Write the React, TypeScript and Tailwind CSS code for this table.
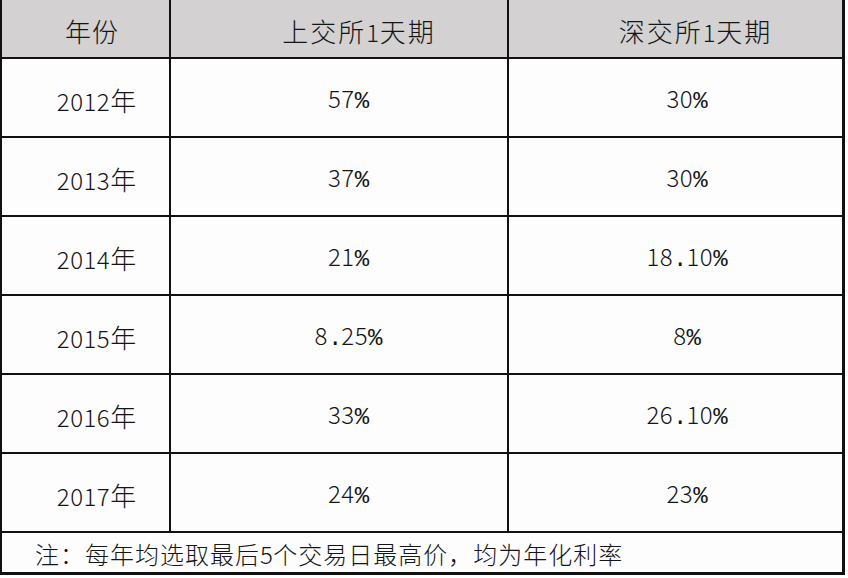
import React from "react";

const rows = [
  { year: "2012年", sh: "57%", sz: "30%" },
  { year: "2013年", sh: "37%", sz: "30%" },
  { year: "2014年", sh: "21%", sz: "18.10%" },
  { year: "2015年", sh: "8.25%", sz: "8%" },
  { year: "2016年", sh: "33%", sz: "26.10%" },
  { year: "2017年", sh: "24%", sz: "23%" },
];

// digits look narrow and thin, the dot and % sign are half-width mono glyphs
function Mixed({ text, cjk = "text-[26px]" }: { text: string; cjk?: string }) {
  const parts = text.split(/([0-9]+|%|\.)/).filter(Boolean);
  return (
    <span className="inline-flex items-baseline whitespace-nowrap">
      {parts.map((p, i) =>
        p === "%" || p === "." ? (
          <span key={i} className="font-['Liberation_Mono',monospace] text-[24px] tracking-[-1px]">
            {p}
          </span>
        ) : /^[0-9]+$/.test(p) ? (
          <span key={i} className="font-['Noto_Sans_CJK_SC',sans-serif] font-light text-[24px] tracking-[0.5px]">
            {p}
          </span>
        ) : (
          <span key={i} className={`font-['Noto_Sans_CJK_SC',sans-serif] font-light ${cjk}`}>
            {p}
          </span>
        )
      )}
    </span>
  );
}

export default function App() {
  return (
    <div className="w-[848px] h-[578px] bg-white">
      <div className="w-[845px] h-[575px] bg-[#111] pl-[2px] pr-[3px] pb-[3px] grid grid-cols-[167px_336px_333px] grid-rows-[57px_77px_77px_77px_77px_77px_77px_39px] gap-[2px] text-[#151515] leading-none">
        <div className="bg-[#d3d1d1] flex items-center justify-center pl-[13px] pt-[5px]">
          <Mixed text="年份" cjk="text-[26px] tracking-[1px]" />
        </div>
        <div className="bg-[#d3d1d1] flex items-center justify-center pl-[40px] pt-[5px]">
          <span className="inline-flex items-baseline">
            <Mixed text="上交所" cjk="text-[26px] tracking-[2px]" />
            <Mixed text="1" />
            <Mixed text="天期" cjk="text-[26px] tracking-[2px]" />
          </span>
        </div>
        <div className="bg-[#d3d1d1] flex items-center justify-center pl-[40px] pt-[5px]">
          <span className="inline-flex items-baseline">
            <Mixed text="深交所" cjk="text-[26px] tracking-[2px]" />
            <Mixed text="1" />
            <Mixed text="天期" cjk="text-[26px] tracking-[2px]" />
          </span>
        </div>

        {rows.map((r) => (
          <React.Fragment key={r.year}>
            <div className="bg-[#fefdfd] flex items-center justify-center pl-[22px] pt-[4px]">
              <Mixed text={r.year} />
            </div>
            <div className="bg-[#fefdfd] flex items-center justify-center pl-[18px] pt-[4px]">
              <Mixed text={r.sh} />
            </div>
            <div className="bg-[#fefdfd] flex items-center justify-center pl-[22px] pt-[4px]">
              <Mixed text={r.sz} />
            </div>
          </React.Fragment>
        ))}

        <div className="col-span-3 bg-[#fefdfd] flex items-center pl-[33px] pt-[2px]">
          <span className="inline-flex items-baseline">
            <Mixed text="注：每年均选取最后" cjk="text-[24px] tracking-[1px]" />
            <Mixed text="5" />
            <Mixed text="个交易日最高价，均为年化利率" cjk="text-[24px] tracking-[1px]" />
          </span>
        </div>
      </div>
    </div>
  );
}
